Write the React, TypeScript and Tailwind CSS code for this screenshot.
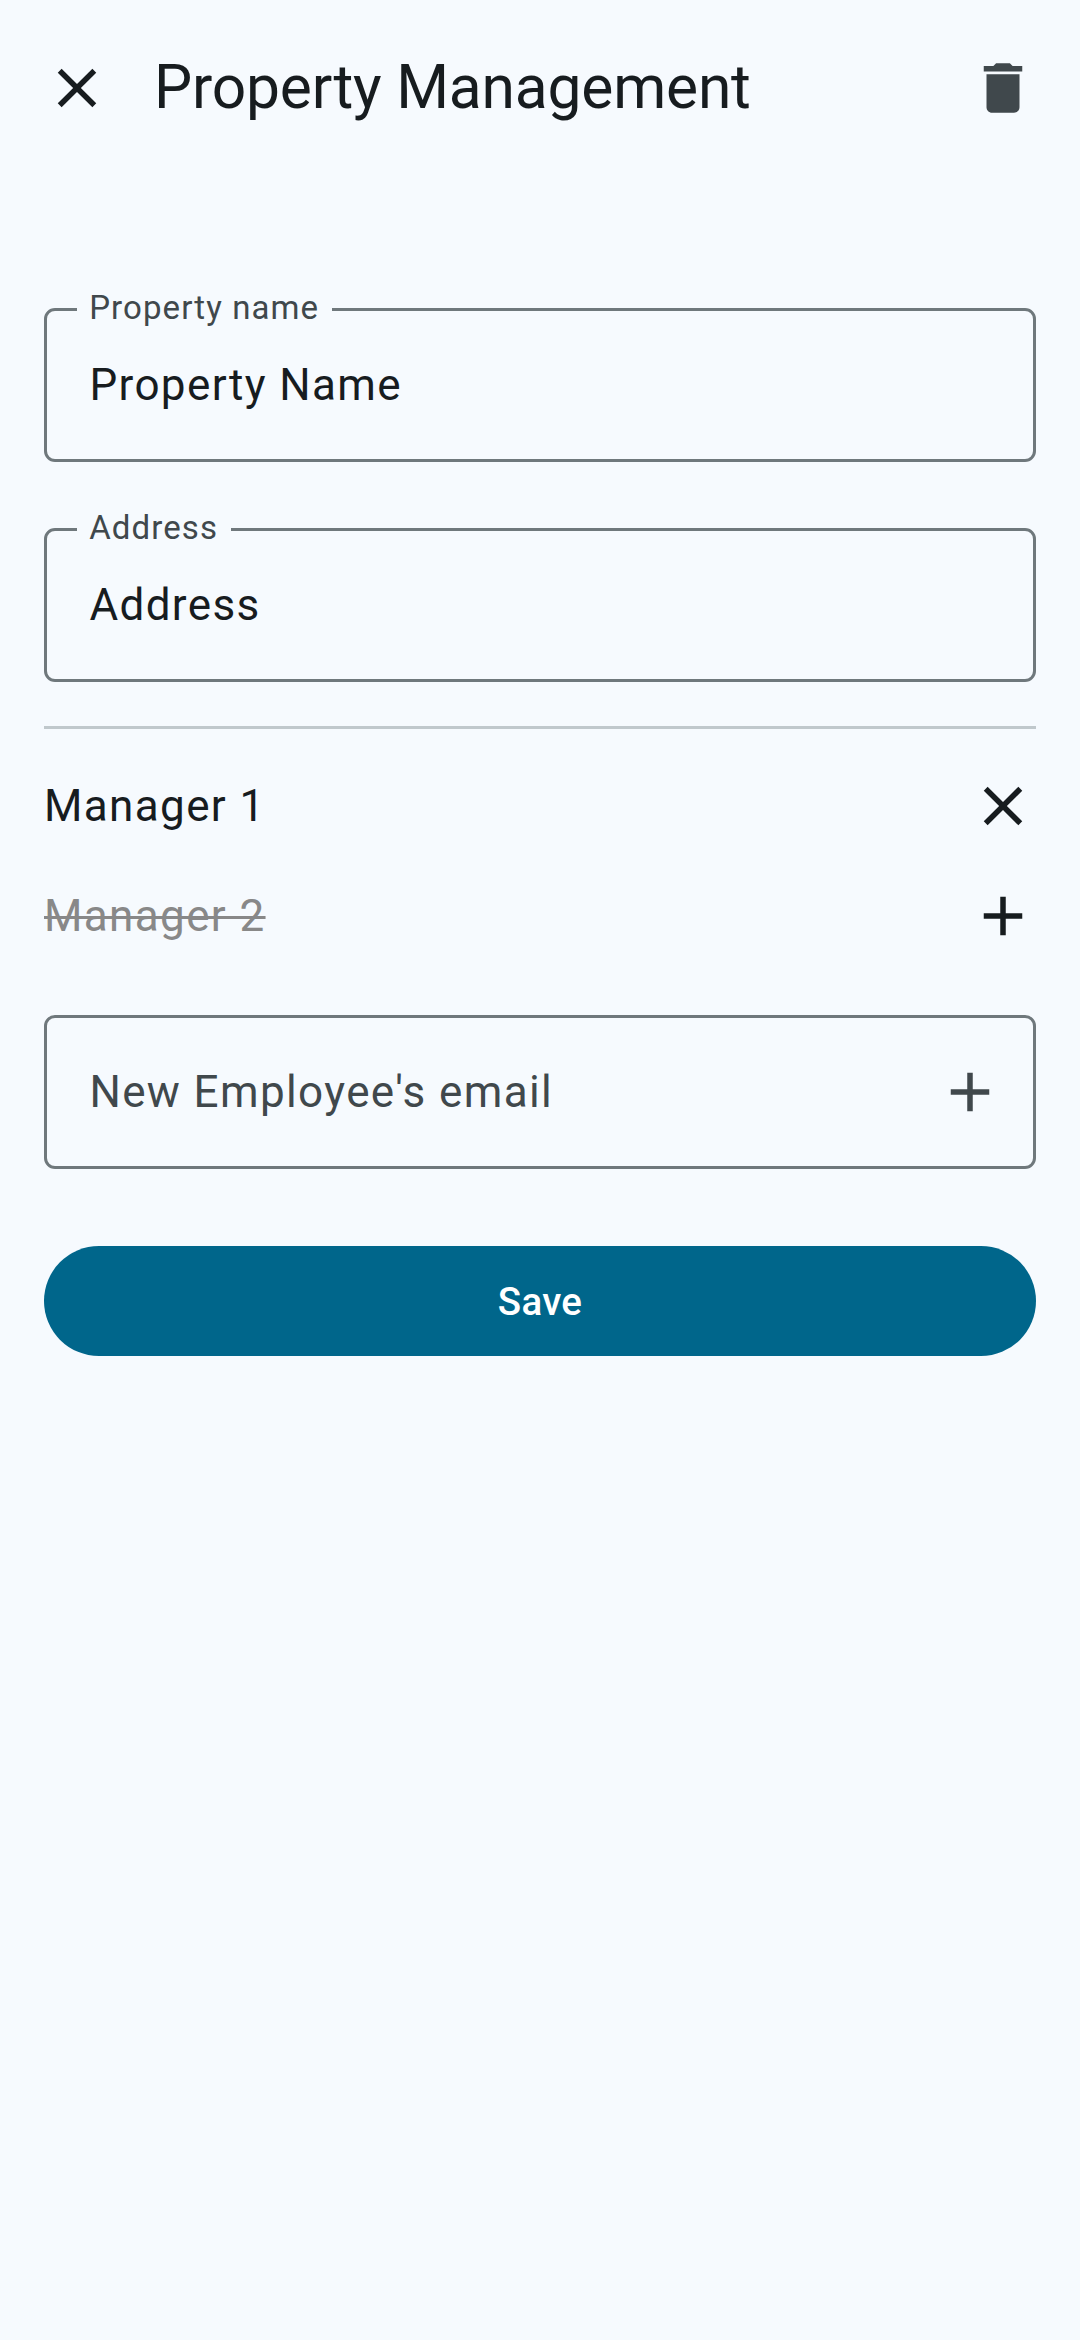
import React from "react";

const CLOSE =
  "M19 6.41L17.59 5 12 10.59 6.41 5 5 6.41 10.59 12 5 17.59 6.41 19 12 13.41 17.59 19 19 17.59 13.41 12z";
const ADD = "M19 13h-6v6h-2v-6H5v-2h6V5h2v6h6v2z";
const DELETE =
  "M6 19c0 1.1.9 2 2 2h8c1.1 0 2-.9 2-2V7H6v12zM19 4h-3.5l-1-1h-5l-1 1H5v2h14V4z";

function Icon({ d, label }: { d: string; label: string }) {
  return (
    <button aria-label={label} className="block size-[66px] shrink-0">
      <svg viewBox="0 0 24 24" className="size-[66px]" fill="currentColor">
        <path d={d} />
      </svg>
    </button>
  );
}

function OutlinedField({ label, value }: { label: string; value: string }) {
  return (
    <div className="relative flex h-[154px] items-center rounded-[11px] border-[3px] border-[#6f787c] px-[42.4px]">
      <span className="absolute -top-[25px] left-[30px] bg-[#f6fafe] pr-[12.7px] pl-[12.2px] text-[33px] leading-[43px] tracking-[1.1px] text-[#40484c]">
        {label}
      </span>
      <span className="text-[44px] leading-[66px] tracking-[1.375px]">{value}</span>
    </div>
  );
}

function ManagerRow({ name, removed = false }: { name: string; removed?: boolean }) {
  return (
    <div className="flex h-[110px] items-center justify-between">
      <span
        className={
          removed
            ? "text-[44px] leading-[66px] tracking-[1.375px] text-[#888888] line-through decoration-[3px]"
            : "text-[44px] leading-[66px] tracking-[1.375px]"
        }
      >
        {name}
      </span>
      <Icon d={removed ? ADD : CLOSE} label={removed ? "Restore" : "Remove"} />
    </div>
  );
}

export default function App() {
  return (
    <div className="flex h-[2340px] w-[1080px] flex-col bg-[#f6fafe] font-['Roboto',sans-serif] text-[#171c1f]">
      <header className="flex h-44 items-center px-11">
        <Icon d={CLOSE} label="Close" />
        <h1 className="ml-11 flex-1 pb-px text-[60.5px] leading-[77px] tracking-[-0.2px]">
          Property Management
        </h1>
        <div className="text-[#40484c]">
          <Icon d={DELETE} label="Delete" />
        </div>
      </header>

      <main className="flex flex-col px-11 pt-[132px]">
        <div className="flex flex-col gap-[66px]">
          <OutlinedField label="Property name" value="Property Name" />
          <OutlinedField label="Address" value="Address" />
        </div>

        <div className="mt-11 h-[2.75px] bg-[#c0c8cc]" />

        <div className="mt-[22.25px] flex flex-col">
          <ManagerRow name="Manager 1" />
          <ManagerRow name="Manager 2" removed />
        </div>

        <div className="mt-11 flex h-[154px] items-center justify-between rounded-[11px] border-[3px] border-[#6f787c] pr-[30px] pl-[42.4px] text-[#40484c]">
          <span className="text-[44px] leading-[66px] tracking-[1.375px]">New Employee's email</span>
          <Icon d={ADD} label="Add" />
        </div>

        <button className="mt-[77px] flex h-[110px] items-center justify-center rounded-full bg-[#00668b] pt-px text-[38.5px] leading-[55px] font-medium tracking-[0.275px] text-white">
          Save
        </button>
      </main>
    </div>
  );
}
